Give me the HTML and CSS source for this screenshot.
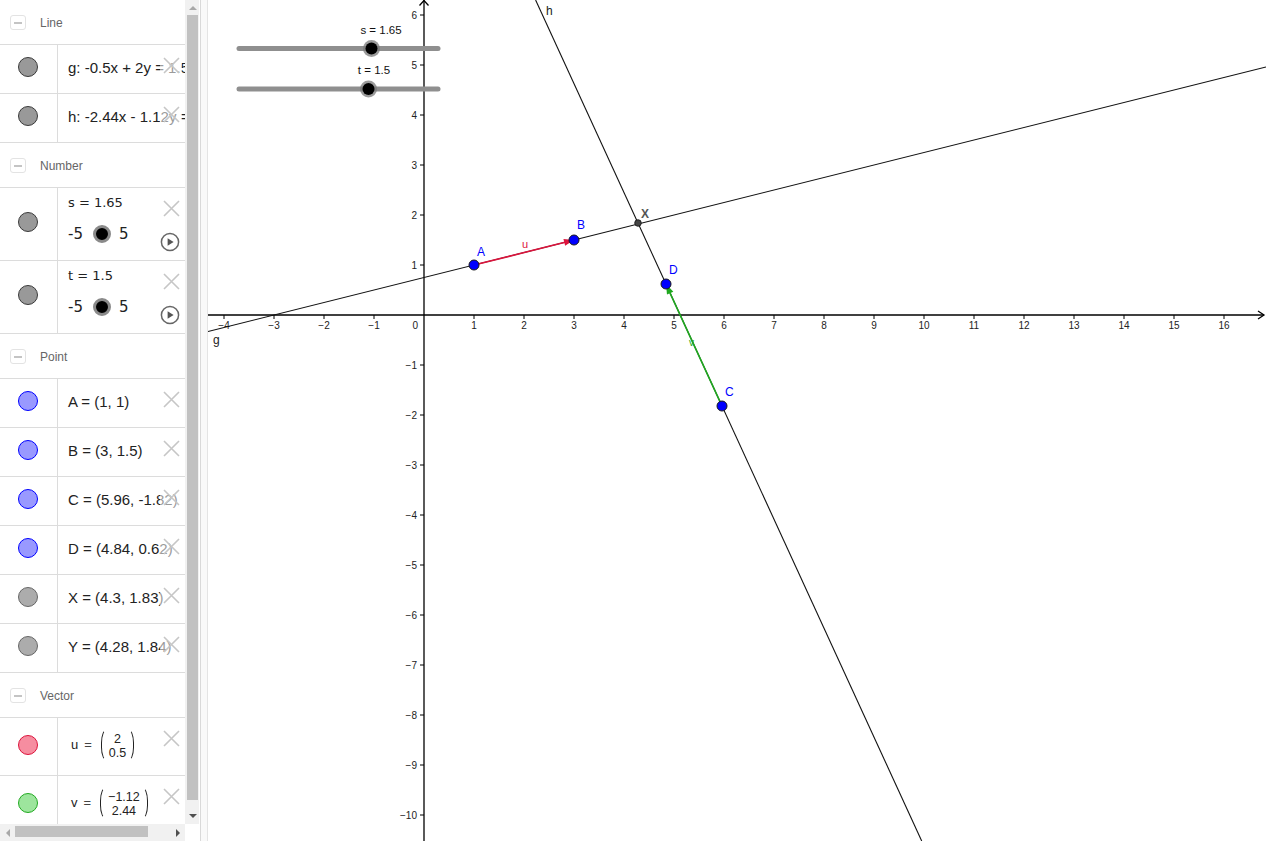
FILE: index.html
```html
<!DOCTYPE html>
<html>
<head>
<meta charset="utf-8">
<title>GeoGebra</title>
<link rel="stylesheet" href="styles.css">
</head>
<body>
<div class="app">
  <aside class="algebra">
    <div class="av-list">
      <div class="hdr"><span class="tog"></span><span class="hdr-t">Line</span></div>
      <div class="item">
        <div class="mcell"><span class="marble m-line"></span></div>
        <div class="txt"><span class="expr">g: -0.5x + 2y = 1.5</span></div>
        <span class="del"><svg viewBox="0 0 17 17" width="17" height="17"><path d="M1 1L16 16M16 1L1 16"/></svg></span>
      </div>
      <div class="item">
        <div class="mcell"><span class="marble m-line"></span></div>
        <div class="txt"><span class="expr">h: -2.44x - 1.12y = 10.81</span></div>
        <span class="del"><svg viewBox="0 0 17 17" width="17" height="17"><path d="M1 1L16 16M16 1L1 16"/></svg></span>
      </div>

      <div class="hdr"><span class="tog"></span><span class="hdr-t">Number</span></div>
      <div class="item item-slider">
        <div class="mcell"><span class="marble m-line"></span></div>
        <div class="txt txt-slider">
          <span class="sl-val">s = 1.65</span>
          <span class="sl-range"><span>-5</span><span class="knob"></span><span>5</span></span>
        </div>
        <span class="del"><svg viewBox="0 0 17 17" width="17" height="17"><path d="M1 1L16 16M16 1L1 16"/></svg></span>
        <span class="play"><svg viewBox="0 0 20 20" width="20" height="20"><circle cx="10" cy="10" r="8.6"/><path d="M7.6 6.2L13.6 10L7.6 13.8Z"/></svg></span>
      </div>
      <div class="item item-slider">
        <div class="mcell"><span class="marble m-line"></span></div>
        <div class="txt txt-slider">
          <span class="sl-val">t = 1.5</span>
          <span class="sl-range"><span>-5</span><span class="knob"></span><span>5</span></span>
        </div>
        <span class="del"><svg viewBox="0 0 17 17" width="17" height="17"><path d="M1 1L16 16M16 1L1 16"/></svg></span>
        <span class="play"><svg viewBox="0 0 20 20" width="20" height="20"><circle cx="10" cy="10" r="8.6"/><path d="M7.6 6.2L13.6 10L7.6 13.8Z"/></svg></span>
      </div>

      <div class="hdr"><span class="tog"></span><span class="hdr-t">Point</span></div>
      <div class="item">
        <div class="mcell"><span class="marble m-pt"></span></div>
        <div class="txt"><span class="expr">A = (1, 1)</span></div>
        <span class="del"><svg viewBox="0 0 17 17" width="17" height="17"><path d="M1 1L16 16M16 1L1 16"/></svg></span>
      </div>
      <div class="item">
        <div class="mcell"><span class="marble m-pt"></span></div>
        <div class="txt"><span class="expr">B = (3, 1.5)</span></div>
        <span class="del"><svg viewBox="0 0 17 17" width="17" height="17"><path d="M1 1L16 16M16 1L1 16"/></svg></span>
      </div>
      <div class="item">
        <div class="mcell"><span class="marble m-pt"></span></div>
        <div class="txt"><span class="expr">C = (5.96, -1.82)</span></div>
        <span class="del"><svg viewBox="0 0 17 17" width="17" height="17"><path d="M1 1L16 16M16 1L1 16"/></svg></span>
      </div>
      <div class="item">
        <div class="mcell"><span class="marble m-pt"></span></div>
        <div class="txt"><span class="expr">D = (4.84, 0.62)</span></div>
        <span class="del"><svg viewBox="0 0 17 17" width="17" height="17"><path d="M1 1L16 16M16 1L1 16"/></svg></span>
      </div>
      <div class="item">
        <div class="mcell"><span class="marble m-grey"></span></div>
        <div class="txt"><span class="expr">X = (4.3, 1.83)</span></div>
        <span class="del"><svg viewBox="0 0 17 17" width="17" height="17"><path d="M1 1L16 16M16 1L1 16"/></svg></span>
      </div>
      <div class="item">
        <div class="mcell"><span class="marble m-grey"></span></div>
        <div class="txt"><span class="expr">Y = (4.28, 1.84)</span></div>
        <span class="del"><svg viewBox="0 0 17 17" width="17" height="17"><path d="M1 1L16 16M16 1L1 16"/></svg></span>
      </div>

      <div class="hdr"><span class="tog"></span><span class="hdr-t">Vector</span></div>
      <div class="item item-vec">
        <div class="mcell"><span class="marble m-red"></span></div>
        <div class="txt">
          <span class="vec">
            <span class="vname">u</span><span class="veq">=</span>
            <span class="paren pl"></span>
            <span class="vcol"><span>2</span><span>0.5</span></span>
            <span class="paren pr"></span>
          </span>
        </div>
        <span class="del"><svg viewBox="0 0 17 17" width="17" height="17"><path d="M1 1L16 16M16 1L1 16"/></svg></span>
      </div>
      <div class="item item-vec">
        <div class="mcell"><span class="marble m-green"></span></div>
        <div class="txt">
          <span class="vec">
            <span class="vname">v</span><span class="veq">=</span>
            <span class="paren pl"></span>
            <span class="vcol"><span>−1.12</span><span>2.44</span></span>
            <span class="paren pr"></span>
          </span>
        </div>
        <span class="del"><svg viewBox="0 0 17 17" width="17" height="17"><path d="M1 1L16 16M16 1L1 16"/></svg></span>
      </div>
    </div>

    <div class="vscroll">
      <span class="sb-btn"><span class="tri-up"></span></span>
      <span class="vthumb"></span>
      <span class="sb-btn sb-down"><span class="tri-down"></span></span>
    </div>
    <div class="hscroll">
      <span class="hbtn"><span class="tri-left"></span></span>
      <span class="hthumb"></span>
      <span class="hbtn hbtn-r"><span class="tri-right"></span></span>
    </div>
    <div class="corner"></div>
  </aside>

  <div class="divider"></div>

  <main class="graph">
    <svg class="plot" width="1058" height="841" viewBox="208 0 1058 841">
      <g class="axis">
        <line x1="208" y1="315" x2="1264" y2="315"/>
        <line x1="424" y1="0" x2="424" y2="841"/>
        <polyline points="1258,311 1264,315 1258,319"/>
        <polyline points="419.5,5.5 424,0.5 428.5,5.5"/>
      </g>
      <g class="ticks">
        <path d="M224 315v4M274 315v4M324 315v4M374 315v4M474 315v4M524 315v4M574 315v4M624 315v4M674 315v4M724 315v4M774 315v4M824 315v4M874 315v4M924 315v4M974 315v4M1024 315v4M1074 315v4M1124 315v4M1174 315v4M1224 315v4"/>
        <path d="M420 15h4M420 65h4M420 115h4M420 165h4M420 215h4M420 265h4M420 365h4M420 415h4M420 465h4M420 515h4M420 565h4M420 615h4M420 665h4M420 715h4M420 765h4M420 815h4"/>
      </g>
      <g class="xl">
        <text x="224" y="329">−4</text>
        <text x="274" y="329">−3</text>
        <text x="324" y="329">−2</text>
        <text x="374" y="329">−1</text>
        <text x="474" y="329">1</text>
        <text x="524" y="329">2</text>
        <text x="574" y="329">3</text>
        <text x="624" y="329">4</text>
        <text x="674" y="329">5</text>
        <text x="724" y="329">6</text>
        <text x="774" y="329">7</text>
        <text x="824" y="329">8</text>
        <text x="874" y="329">9</text>
        <text x="924" y="329">10</text>
        <text x="974" y="329">11</text>
        <text x="1024" y="329">12</text>
        <text x="1074" y="329">13</text>
        <text x="1124" y="329">14</text>
        <text x="1174" y="329">15</text>
        <text x="1224" y="329">16</text>
      </g>
      <g class="yl">
        <text x="418" y="329">0</text>
        <text x="417" y="19">6</text>
        <text x="417" y="69">5</text>
        <text x="417" y="119">4</text>
        <text x="417" y="169">3</text>
        <text x="417" y="219">2</text>
        <text x="417" y="269">1</text>
        <text x="417" y="369">−1</text>
        <text x="417" y="419">−2</text>
        <text x="417" y="469">−3</text>
        <text x="417" y="519">−4</text>
        <text x="417" y="569">−5</text>
        <text x="417" y="619">−6</text>
        <text x="417" y="669">−7</text>
        <text x="417" y="719">−8</text>
        <text x="417" y="769">−9</text>
        <text x="417" y="819">−10</text>
      </g>

      <g class="ln">
        <line x1="208" y1="331.5" x2="1266" y2="67"/>
        <line x1="535.6" y1="0" x2="921.7" y2="841"/>
      </g>
      <text class="lbl-ln" x="213" y="344">g</text>
      <text class="lbl-ln" x="546" y="15">h</text>

      <line class="vec-u" x1="474" y1="265" x2="565" y2="242.3"/>
      <polygon class="vec-u-h" points="574,240 565.15,245.8 563.45,239"/>
      <text class="lbl-u" x="522" y="248">u</text>

      <line class="vec-v" x1="722" y1="406" x2="670" y2="293"/>
      <polygon class="vec-v-h" points="666,284 673.35,291.63 666.99,294.55"/>
      <text class="lbl-v" x="689" y="346">v</text>

      <circle class="pt" cx="474" cy="265" r="5"/>
      <circle class="pt" cx="574" cy="240" r="5"/>
      <circle class="pt" cx="722" cy="406" r="5"/>
      <circle class="pt" cx="666" cy="284" r="5"/>
      <circle class="pt-x" cx="638" cy="223" r="3.3"/>
      <text class="lbl-pt" x="477" y="256">A</text>
      <text class="lbl-pt" x="577" y="229">B</text>
      <text class="lbl-pt" x="725" y="396">C</text>
      <text class="lbl-pt" x="669" y="274">D</text>
      <text class="lbl-x" x="641" y="217.5">X</text>

      <line class="sl-track" x1="239" y1="48.5" x2="438" y2="48.5"/>
      <circle class="sl-ring" cx="371.5" cy="48.5" r="8.5"/>
      <circle class="sl-knob" cx="371.5" cy="48.5" r="6"/>
      <text class="sl-lbl" x="381" y="34">s = 1.65</text>

      <line class="sl-track" x1="239" y1="89" x2="438" y2="89"/>
      <circle class="sl-ring" cx="368.5" cy="89" r="8.5"/>
      <circle class="sl-knob" cx="368.5" cy="89" r="6"/>
      <text class="sl-lbl" x="374" y="74">t = 1.5</text>
    </svg>
  </main>
</div>
</body>
</html>
```
FILE: styles.css
```css
* { box-sizing: border-box; }
html, body { margin: 0; padding: 0; background: #fff; }
body { font-family: "Liberation Sans", Arial, sans-serif; color: #222; overflow: hidden; }

.app { display: flex; width: 1266px; height: 841px; overflow: hidden; }

/* ---------- algebra view ---------- */
.algebra {
  width: 199px;
  flex: none;
  display: grid;
  grid-template-columns: 185px 14px;
  grid-template-rows: 824px 17px;
}
.av-list { overflow: hidden; background: #fff; }

.hdr {
  height: 45px;
  border-bottom: 1px solid #dcdcdc;
  display: flex;
  align-items: center;
  padding: 1px 0 0 10px;
}
.tog {
  width: 16px; height: 15px;
  border: 1px solid #e3e3e3;
  border-radius: 3px;
  position: relative;
  margin-right: 14px;
}
.tog::after {
  content: "";
  position: absolute;
  left: 3px; right: 3px; top: 6px;
  height: 1.5px;
  background: #c4c4c4;
}
.hdr-t { font-size: 12px; color: #666; }

.item {
  position: relative;
  display: flex;
  height: 49px;
  border-bottom: 1px solid #dcdcdc;
  padding-bottom: 4px;
}
.item-slider { height: 73px; }
.item-vec { height: 58px; }

.mcell {
  width: 58px;
  flex: none;
  border-right: 1px solid #dcdcdc;
  margin-bottom: -4px;
  padding-bottom: 4px;
  display: flex;
  align-items: center;
  justify-content: center;
  padding-right: 1px;
}
.marble {
  width: 20px; height: 20px;
  border-radius: 50%;
  border: 1px solid #333;
  background: #999;
}
.m-line { background: #999; border-color: #3a3a3a; }
.m-pt { background: #9999ff; border-color: #0000ff; }
.m-grey { background: #acacac; border-color: #666; }
.m-red { background: #f68da0; border-color: #dc143c; }
.m-green { background: #9de59d; border-color: #22aa22; }

.txt {
  flex: 1;
  min-width: 0;
  padding-left: 10px;
  display: flex;
  align-items: center;
  white-space: nowrap;
  overflow: hidden;
}
.expr {
  font-family: "Liberation Sans", Arial, sans-serif;
  font-size: 15px;
  color: #222;
}

.txt-slider {
  flex-direction: column;
  align-items: flex-start;
  justify-content: flex-start;
  padding-top: 5px;
}
.sl-val {
  font-family: "DejaVu Sans", sans-serif;
  font-size: 13px;
  line-height: 20px;
  height: 20px;
}
.sl-range {
  margin-top: 9px;
  display: flex;
  align-items: center;
  height: 24px;
  font-family: "DejaVu Sans", sans-serif;
  font-size: 15px;
}
.knob {
  width: 18px; height: 18px;
  border-radius: 50%;
  background: #000;
  border: 3px solid #8a8a8a;
  margin: 0 8px 0 10px;
}

.del {
  position: absolute;
  top: 10px;
  right: 3px;
  width: 22px;
  height: 21px;
  background: rgba(255, 255, 255, 0.55);
  display: flex;
  align-items: center;
  justify-content: center;
}
.del svg { stroke: #c6c6c6; stroke-width: 1.6; fill: none; }

.play {
  position: absolute;
  top: 44px;
  right: 5px;
  width: 20px; height: 20px;
}
.play svg circle { fill: none; stroke: #666; stroke-width: 1.5; }
.play svg path { fill: #555; }

/* vector display */
.vec {
  display: inline-flex;
  align-items: center;
  font-family: "Liberation Sans", Arial, sans-serif;
  padding-left: 3px;
  color: #222;
}
.vname { font-size: 13px; }
.veq { font-size: 13px; margin: 0 9px 0 6px; color: #444; }
.paren {
  width: 6px;
  height: 32px;
  border: 1.3px solid #222;
}
.pl { border-right: none; border-top-color: transparent; border-bottom-color: transparent; border-radius: 7px 0 0 7px / 16px 0 0 16px; }
.pr { border-left: none; border-top-color: transparent; border-bottom-color: transparent; border-radius: 0 7px 7px 0 / 0 16px 16px 0; }
.vcol {
  display: flex;
  flex-direction: column;
  align-items: center;
  font-size: 12.5px;
  line-height: 14px;
  padding: 0 2px;
  margin-top: 2px;
}

/* scrollbars */
.vscroll {
  background: #f1f1f1;
  display: flex;
  flex-direction: column;
}
.sb-btn {
  height: 15px;
  display: flex;
  align-items: center;
  justify-content: center;
  flex: none;
}
.sb-down { height: 17px; margin-top: auto; }
.vthumb {
  height: 785px;
  margin: 0 1px 0 2px;
  background: #c1c1c1;
  flex: none;
}
.tri-up { width: 0; height: 0; border-left: 4px solid transparent; border-right: 4px solid transparent; border-bottom: 4px solid #a8a8a8; margin-left: 1px; }
.tri-down { width: 0; height: 0; border-left: 4px solid transparent; border-right: 4px solid transparent; border-top: 4px solid #505050; margin-left: 1px; }

.hscroll {
  background: #f1f1f1;
  display: flex;
  align-items: flex-start;
}
.hbtn {
  width: 15px; height: 17px;
  display: flex;
  align-items: center;
  justify-content: center;
  flex: none;
}
.hbtn-r { margin-left: auto; }
.hthumb {
  width: 133px;
  height: 11px;
  margin-top: 2px;
  background: #c1c1c1;
}
.tri-left { width: 0; height: 0; border-top: 4px solid transparent; border-bottom: 4px solid transparent; border-right: 4px solid #a8a8a8; }
.tri-right { width: 0; height: 0; border-top: 4px solid transparent; border-bottom: 4px solid transparent; border-left: 4px solid #505050; }
.corner { background: #fff; }

/* divider */
.divider {
  width: 9px;
  flex: none;
  background: linear-gradient(to right, #fff 0 1px, #d9d9d9 1px 2px, #f9f9f9 2px 8px, #e4e4e4 8px 9px);
}

/* ---------- graphics view ---------- */
.graph { width: 1058px; height: 841px; flex: none; background: #fff; overflow: hidden; }
.plot { display: block; }
.axis line, .axis polyline { stroke: #000; stroke-width: 1.3; fill: none; }
.ticks path { stroke: #000; stroke-width: 1; fill: none; }
.xl text { font: 10px "Liberation Sans", Arial, sans-serif; fill: #222; text-anchor: middle; }
.yl text { font: 10px "Liberation Sans", Arial, sans-serif; fill: #222; text-anchor: end; }
.ln line { stroke: #111; stroke-width: 1.1; }
.lbl-ln { font: 12px "Liberation Sans", Arial, sans-serif; fill: #222; }

.vec-u { stroke: #dc143c; stroke-width: 1.7; }
.vec-u-h { fill: #dc143c; }
.vec-v { stroke: #1fa81f; stroke-width: 1.7; }
.vec-v-h { fill: #1fa81f; }
.lbl-u { font: 11px "Liberation Sans", Arial, sans-serif; fill: #dc143c; }
.lbl-v { font: 10px "Liberation Sans", Arial, sans-serif; fill: #1fa81f; }

.pt { fill: #0000ff; stroke: #1a1a1a; stroke-width: 1; }
.pt-x { fill: #444; stroke: #111; stroke-width: 0.8; }
.lbl-pt { font: 12px "Liberation Sans", Arial, sans-serif; fill: #0000ff; }
.lbl-x { font: 12px "Liberation Sans", Arial, sans-serif; fill: #555; font-weight: bold; }

.sl-track { stroke: #8f8f8f; stroke-width: 5; stroke-linecap: round; }
.sl-ring { fill: #7a7a7a; fill-opacity: 0.75; }
.sl-knob { fill: #000; }
.sl-lbl { font: 11.5px "Liberation Sans", Arial, sans-serif; fill: #111; text-anchor: middle; }
```
